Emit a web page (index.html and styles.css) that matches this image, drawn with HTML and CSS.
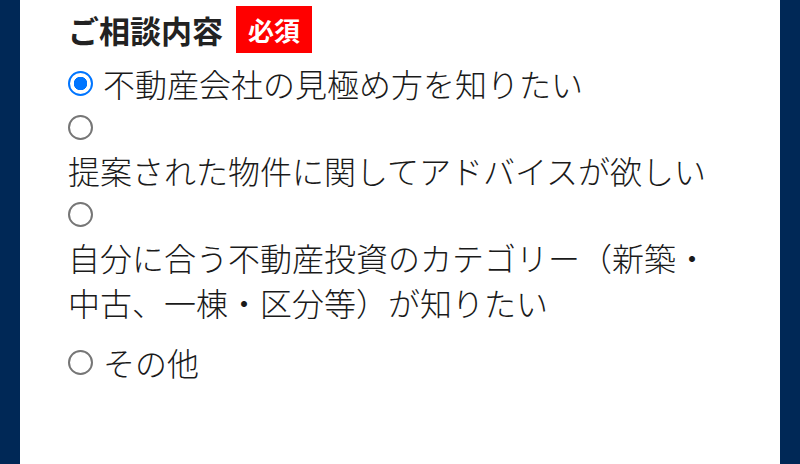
FILE: index.html
```html
<!DOCTYPE html>
<html lang="ja">
<head>
<meta charset="utf-8">
<title>ご相談内容</title>
<link rel="stylesheet" href="styles.css">
</head>
<body>
<div class="panel">
  <div class="field-head">
    <h3 class="field-title">ご相談内容</h3>
    <span class="badge">必須</span>
  </div>
  <div class="options">
    <label class="option">
      <input type="radio" name="topic" class="radio" checked>
      <span class="text">不動産会社の見極め方を知りたい</span>
    </label>
    <label class="option">
      <input type="radio" name="topic" class="radio">
      <span class="text">提案された物件に関してアドバイスが欲しい</span>
    </label>
    <label class="option">
      <input type="radio" name="topic" class="radio">
      <span class="text">自分に合う不動産投資のカテゴリー（新築・中古、一棟・区分等）が知りたい</span>
    </label>
    <label class="option option-last">
      <input type="radio" name="topic" class="radio">
      <span class="text">その他</span>
    </label>
  </div>
</div>
</body>
</html>
```

FILE: styles.css
```css
html, body {
  margin: 0;
  padding: 0;
}
body {
  background: #002856;
  font-family: "Noto Sans CJK JP", "Noto Sans", sans-serif;
  color: #1a1a1a;
}
.panel {
  margin: 0 20px;
  background: #fff;
  min-height: 464px;
  padding: 6px 48px 0;
  box-sizing: border-box;
}
.field-head {
  display: flex;
  align-items: center;
  gap: 13px;
  margin-bottom: 8px;
}
.field-title {
  margin: 0;
  font-size: 31px;
  font-weight: 700;
  line-height: 47px;
  color: #222;
}
.badge {
  background: #f00;
  color: #fff;
  font-size: 26px;
  font-weight: 700;
  line-height: 47px;
  padding: 0 12px;
}
.options {
  display: flex;
  flex-direction: column;
}
.option {
  display: flex;
  flex-wrap: wrap;
  align-items: center;
  column-gap: 10px;
  font-size: 32px;
  font-weight: 300;
  line-height: 45px;
  cursor: pointer;
}
.option-last {
  margin-top: 15px;
}
.radio {
  appearance: none;
  -webkit-appearance: none;
  width: 25px;
  height: 25px;
  margin: 8.5px 0;
  border: 2px solid #767676;
  border-radius: 50%;
  background: #fff;
  box-sizing: border-box;
  flex: none;
}
.radio:checked {
  border: 2.5px solid #0075ff;
  background: radial-gradient(circle, #0075ff 0 6.5px, #fff 7px);
}
.text {
  min-width: 0;
}
```
